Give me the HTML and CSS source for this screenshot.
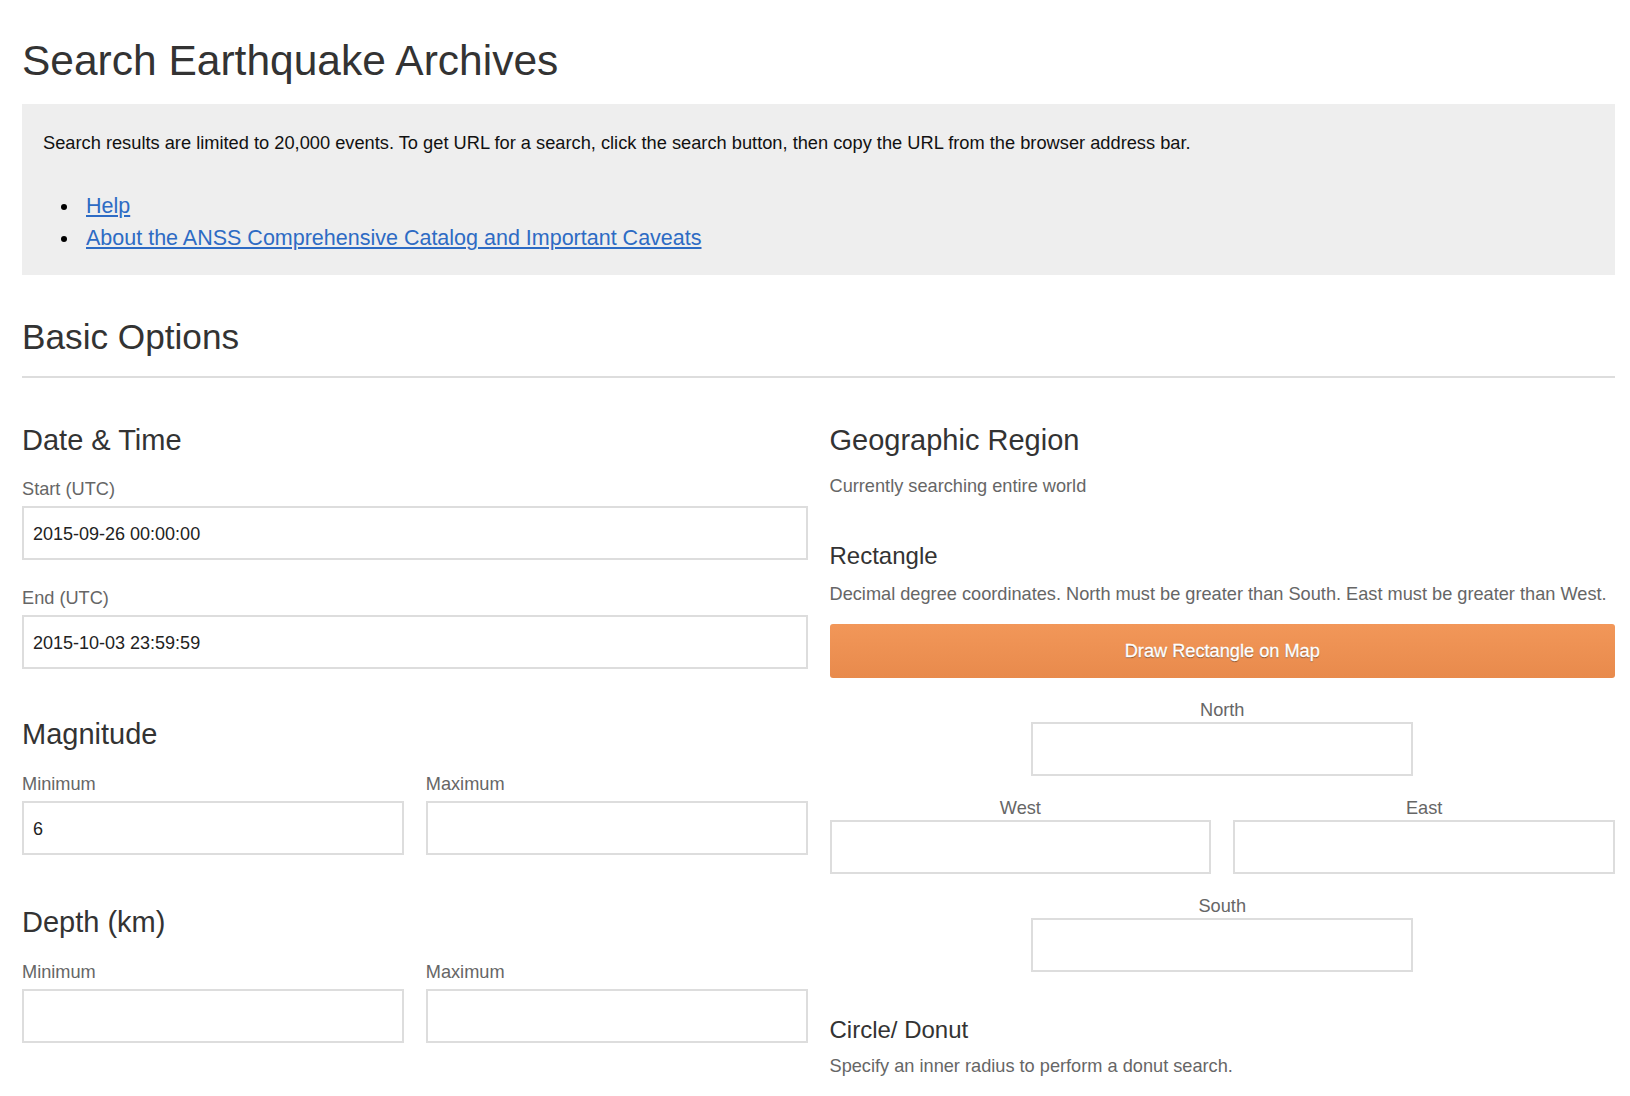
FILE: index.html
```html
<!DOCTYPE html>
<html lang="en">
<head>
<meta charset="utf-8">
<title>Search Earthquake Archives</title>
<link rel="stylesheet" href="styles.css">
</head>
<body>
<h1 class="page-title">Search Earthquake Archives</h1>
<div class="notice">
  <p class="notice-text">Search results are limited to 20,000 events. To get URL for a search, click the search button, then copy the URL from the browser address bar.</p>
  <ul class="notice-links">
    <li><a href="#">Help</a></li>
    <li><a href="#">About the ANSS Comprehensive Catalog and Important Caveats</a></li>
  </ul>
</div>

<h2 class="section-title">Basic Options</h2>

<div class="columns">
  <div class="col">
    <section class="group">
      <h3 class="group-title">Date &amp; Time</h3>
      <div class="field">
        <label class="label">Start (UTC)</label>
        <input class="input" type="text" value="2015-09-26 00:00:00">
      </div>
      <div class="field">
        <label class="label">End (UTC)</label>
        <input class="input" type="text" value="2015-10-03 23:59:59">
      </div>
    </section>
    <section class="group">
      <h3 class="group-title">Magnitude</h3>
      <div class="pair">
        <div class="field">
          <label class="label">Minimum</label>
          <input class="input" type="text" value="6">
        </div>
        <div class="field">
          <label class="label">Maximum</label>
          <input class="input" type="text" value="">
        </div>
      </div>
    </section>
    <section class="group">
      <h3 class="group-title">Depth (km)</h3>
      <div class="pair">
        <div class="field">
          <label class="label">Minimum</label>
          <input class="input" type="text" value="">
        </div>
        <div class="field">
          <label class="label">Maximum</label>
          <input class="input" type="text" value="">
        </div>
      </div>
    </section>
  </div>

  <div class="col">
    <h3 class="group-title">Geographic Region</h3>
    <p class="help first">Currently searching entire world</p>
    <h4 class="sub-title">Rectangle</h4>
    <p class="help">Decimal degree coordinates. North must be greater than South. East must be greater than West.</p>
    <button class="draw-btn" type="button">Draw Rectangle on Map</button>
    <div class="compass">
      <div class="cfield north">
        <label class="clabel">North</label>
        <input class="input" type="text">
      </div>
      <div class="cpair">
        <div class="cfield">
          <label class="clabel">West</label>
          <input class="input" type="text">
        </div>
        <div class="cfield">
          <label class="clabel">East</label>
          <input class="input" type="text">
        </div>
      </div>
      <div class="cfield north">
        <label class="clabel">South</label>
        <input class="input" type="text">
      </div>
    </div>
    <h4 class="sub-title circle">Circle/ Donut</h4>
    <p class="help">Specify an inner radius to perform a donut search.</p>
  </div>
</div>
</body>
</html>
```

FILE: styles.css
```css
* { box-sizing: border-box; }

html, body {
  margin: 0;
  background: #fff;
}

body {
  padding: 0 15px 0 22px;
  font-family: "Liberation Sans", Arial, Helvetica, sans-serif;
  color: #333;
}

.page-title {
  margin: 36px 0 18px;
  font-size: 42.5px;
  line-height: 50px;
  font-weight: normal;
  color: #333;
}

.notice {
  background: #eeeeee;
  padding: 27px 21px 21px;
}

.notice-text {
  margin: 0;
  font-size: 18.25px;
  line-height: 24px;
  color: #111;
}

.notice-links {
  margin: 35px 0 0;
  padding-left: 43px;
  list-style: none;
  font-size: 21.5px;
  line-height: 32px;
  color: #000;
}

.notice-links li::before {
  content: "";
  display: inline-block;
  width: 6px;
  height: 6px;
  margin-left: -25px;
  margin-right: 19px;
  border-radius: 50%;
  background: #000;
  vertical-align: middle;
}

.notice-links a {
  color: #2d6bc4;
  text-decoration: underline;
}

.section-title {
  margin: 41px 0 0;
  padding-bottom: 18px;
  border-bottom: 2px solid #dddddd;
  font-size: 35.2px;
  line-height: 42px;
  font-weight: normal;
  color: #333;
}

.columns {
  display: grid;
  grid-template-columns: 1fr 1fr;
  column-gap: 22px;
  margin-top: 44px;
}

.group + .group {
  margin-top: 47px;
}

.group:last-child {
  margin-top: 49px;
}

.group-title {
  margin: 0 0 19px;
  font-size: 29px;
  line-height: 36px;
  font-weight: normal;
  color: #333;
}

.group + .group .group-title {
  margin-bottom: 20px;
}

.field + .field {
  margin-top: 26px;
}

.pair {
  display: grid;
  grid-template-columns: 1fr 1fr;
  column-gap: 22px;
}

.pair .field + .field {
  margin-top: 0;
}

.label {
  display: block;
  margin-bottom: 5px;
  font-size: 18.2px;
  line-height: 24px;
  color: #666;
}

.input {
  display: block;
  width: 100%;
  height: 54px;
  margin: 0;
  padding: 2px 9px 0;
  border: 2px solid #dddddd;
  border-radius: 0;
  background: #fff;
  font-family: "Liberation Sans", Arial, Helvetica, sans-serif;
  font-size: 18px;
  color: #222;
  outline: none;
}

.help {
  margin: 0;
  font-size: 18.2px;
  line-height: 24px;
  color: #666;
}

.help.first {
  margin-top: -3px;
}

.sub-title {
  margin: 43px 0 11px;
  font-size: 24px;
  line-height: 30px;
  font-weight: normal;
  color: #333;
}

.draw-btn {
  display: block;
  width: 100%;
  height: 54px;
  margin-top: 18px;
  border: 0;
  border-radius: 3px;
  background: linear-gradient(#f29759, #e88a4c);
  color: #fff;
  font-family: "Liberation Sans", Arial, Helvetica, sans-serif;
  font-size: 18.2px;
  -webkit-text-stroke: 0.3px #fff;
  text-shadow: 0 1px 1px rgba(0, 0, 0, 0.45);
}

.compass {
  margin-top: 20px;
}

.cfield.north {
  width: calc((100% - 22px) / 2);
  margin: 0 auto;
}

.cpair {
  display: grid;
  grid-template-columns: 1fr 1fr;
  column-gap: 22px;
  margin: 20px 0 20px;
}

.clabel {
  display: block;
  text-align: center;
  font-size: 18.2px;
  line-height: 24px;
  color: #666;
}

.sub-title.circle {
  margin-top: 43px;
  margin-bottom: 9px;
}
```
